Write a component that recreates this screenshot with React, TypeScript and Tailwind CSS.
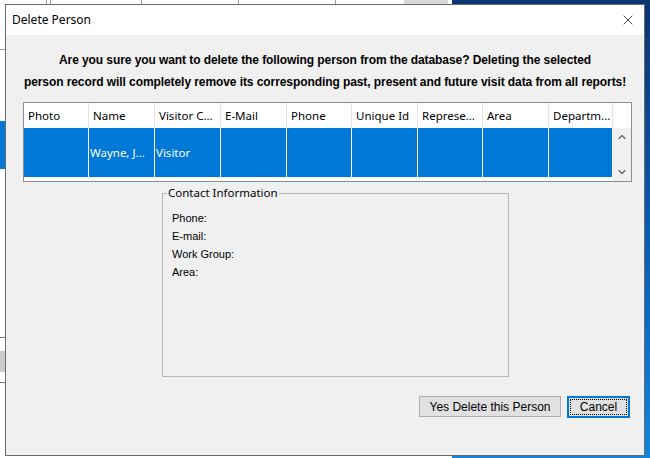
import { X, ChevronUp, ChevronDown } from "lucide-react";

const columns = [
  { label: "Photo", w: "w-[65px]" },
  { label: "Name", w: "w-[66px]" },
  { label: "Visitor C...", w: "w-[66px]" },
  { label: "E-Mail", w: "w-[66px]" },
  { label: "Phone", w: "w-[65px]" },
  { label: "Unique Id", w: "w-[66px]" },
  { label: "Represe...", w: "w-[65px]" },
  { label: "Area", w: "w-[66px]" },
  { label: "Departm...", w: "w-[64px]" },
];

const rowValues = ["", "Wayne, J...", "Visitor", "", "", "", "", "", ""];

const contactLabels = ["Phone:", "E-mail:", "Work Group:", "Area:"];

export default function App() {
  return (
    <div className="relative w-[650px] h-[458px] overflow-hidden bg-white font-['Liberation_Sans',sans-serif] text-black">
      {/* desktop + window behind the dialog */}
      <div className="absolute left-[452px] top-0 right-0 bottom-0 bg-gradient-to-b from-[#0a3570] via-[#0b5bb0] to-[#1186dc]" />
      <div className="absolute left-[404px] top-0 w-[44px] h-[5px] bg-[#d9d9d9]" />
      <div className="absolute left-[46px] top-0 w-px h-[5px] bg-[#9a9a9a]" />
      <div className="absolute left-[50px] top-0 w-px h-[5px] bg-[#9a9a9a]" />
      <div className="absolute left-[141px] top-0 w-px h-[5px] bg-[#9a9a9a]" />
      <div className="absolute left-[238px] top-0 w-px h-[5px] bg-[#9a9a9a]" />
      <div className="absolute left-[335px] top-0 w-px h-[5px] bg-[#9a9a9a]" />
      <div className="absolute left-0 top-[49px] w-[5px] h-px bg-[#9a9a9a]" />
      <div className="absolute left-0 top-[121px] w-[5px] h-[48px] bg-[#0078d7]" />
      <div className="absolute left-0 top-[337px] w-[5px] h-px bg-[#7a7a7a]" />
      <div className="absolute left-0 top-[351px] w-[5px] h-[21px] bg-[#cccccc]" />
      <div className="absolute left-0 top-[382px] w-[5px] h-px bg-[#7a7a7a]" />

      {/* dialog */}
      <div className="absolute left-[5px] top-[4px] w-[640px] h-[452px] border border-[#6a6a6a] bg-[#f0f0f0] flex flex-col">
        <div className="h-[30px] bg-white flex items-center justify-between pl-[6px] pr-[8px] shrink-0">
          <span className="font-['Noto_Sans',sans-serif] text-[12px] text-black">Delete Person</span>
          <X size={16} strokeWidth={1.1} className="text-black" />
        </div>

        <div className="flex flex-col pt-[14px] text-center font-bold text-[12px] leading-[22px] tracking-[-0.08px]">
          <p>Are you sure you want to delete the following person from the database? Deleting the selected</p>
          <p>person record will completely remove its corresponding past, present and future visit data from all reports!</p>
        </div>

        {/* table */}
        <div className="ml-[17px] mt-[9px] w-[609px] h-[80px] border border-[#8c8c8c] bg-white flex font-['Noto_Sans',sans-serif] text-[11.5px]">
          <div className="flex flex-col">
            <div className="flex h-[25px] bg-white">
              {columns.map((c) => (
                <div
                  key={c.label}
                  className={`${c.w} h-full border-r border-[#e5e5e5] pl-[4px] flex items-center whitespace-nowrap`}
                >
                  {c.label}
                </div>
              ))}
            </div>
            <div className="flex h-[49px] bg-[#0078d7] text-white">
              {rowValues.map((v, i) => (
                <div
                  key={i}
                  className={`${columns[i].w} h-full border-r border-white pl-[1px] flex items-center whitespace-nowrap`}
                >
                  {v}
                </div>
              ))}
            </div>
          </div>
          <div className="flex-1 flex flex-col">
            <div className="h-[25px] bg-white" />
            <div className="flex-1 bg-[#f0f0f0] flex flex-col items-center justify-between py-[3px] text-[#5a5a5a]">
              <ChevronUp size={12} strokeWidth={2.2} />
              <ChevronDown size={12} strokeWidth={2.2} />
            </div>
          </div>
        </div>

        {/* contact group */}
        <div className="relative ml-[156px] mt-[11px] w-[347px] h-[184px] border border-[#b5b5b5]">
          <span className="absolute left-[4px] top-[-8px] bg-[#f0f0f0] px-[1px] font-['Noto_Sans',sans-serif] text-[11.5px] leading-[14px]">
            Contact Information
          </span>
          <div className="flex flex-col pl-[9px] pt-[15px] text-[11px] leading-[18px]">
            {contactLabels.map((l) => (
              <span key={l}>{l}</span>
            ))}
          </div>
        </div>

        {/* buttons */}
        <div className="flex justify-end gap-[6px] mt-[19px] pr-[14px] text-[12px]">
          <button className="w-[142px] h-[21px] bg-[#e1e1e1] border border-[#adadad] flex items-center justify-center">
            Yes Delete this Person
          </button>
          <button className="w-[63px] h-[22px] bg-[#e1e1e1] border-2 border-[#0078d7] p-px">
            <span className="w-full h-full border border-dotted border-black flex items-center justify-center">
              Cancel
            </span>
          </button>
        </div>
      </div>
    </div>
  );
}
